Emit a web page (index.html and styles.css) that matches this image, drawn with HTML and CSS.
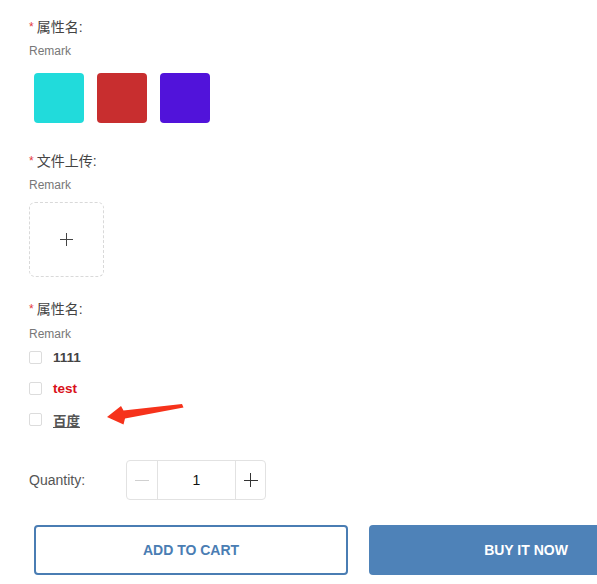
FILE: index.html
```html
<!DOCTYPE html>
<html lang="zh">
<head>
<meta charset="utf-8">
<link rel="stylesheet" href="styles.css">
</head>
<body>
<div class="page">
  <div class="field-label first"><span class="req">*</span>属性名:</div>
  <div class="remark">Remark</div>
  <div class="swatches">
    <div class="swatch cyan"></div>
    <div class="swatch red"></div>
    <div class="swatch purple"></div>
  </div>

  <div class="field-label l2"><span class="req">*</span>文件上传:</div>
  <div class="remark">Remark</div>
  <div class="upload"><span class="plus-v"></span><span class="plus-h"></span></div>

  <div class="field-label l3"><span class="req">*</span>属性名:</div>
  <div class="remark r3">Remark</div>
  <div class="checks">
    <label class="check"><span class="box"></span><span class="opt">1111</span></label>
    <label class="check"><span class="box"></span><span class="opt red-text">test</span></label>
    <label class="check"><span class="box"></span><span class="opt link">百度</span></label>
  </div>

  <div class="qty-row">
    <span class="qty-label">Quantity:</span>
    <div class="stepper">
      <div class="step minus"><span class="bar"></span></div>
      <div class="value">1</div>
      <div class="step plus"><span class="bar"></span><span class="bar vert"></span></div>
    </div>
  </div>

  <div class="actions">
    <button class="btn outline">ADD TO CART</button>
    <button class="btn solid">BUY IT NOW</button>
  </div>

  <svg class="arrow" width="597" height="584" viewBox="0 0 597 584">
    <path d="M107,417 L121,406 L123.5,410.5 L182,404 L183.5,407.5 L125,418.5 L123.5,424.5 Z" fill="#f6321b"/>
  </svg>
</div>
</body>
</html>
```
FILE: styles.css
```css
html, body {
  margin: 0;
  padding: 0;
  background: #fff;
}
body {
  font-family: "Liberation Sans", Arial, "Noto Sans CJK SC", sans-serif;
  color: #333;
  overflow: hidden;
  width: 597px;
  height: 584px;
}
.page {
  position: relative;
  padding-left: 29px;
  padding-top: 17px;
  width: 597px;
  height: 584px;
  box-sizing: border-box;
  overflow: hidden;
}
.field-label {
  height: 20px;
  line-height: 20px;
  font-size: 14px;
  color: #444;
  font-family: "Liberation Sans", "Noto Sans CJK SC", sans-serif;
}
.req {
  color: #e4393c;
  font-size: 12px;
  margin-right: 3px;
  vertical-align: 1px;
}
.l2 { margin-top: 28px; }
.l3 { margin-top: 22px; }
.remark {
  margin-top: 6px;
  height: 16px;
  line-height: 16px;
  font-size: 12px;
  color: #777;
}
.r3 { margin-top: 7px; }
.swatches {
  display: flex;
  gap: 13px;
  margin-top: 14px;
  padding-left: 5px;
}
.swatch {
  width: 50px;
  height: 50px;
  border-radius: 4px;
}
.cyan { background: #21dbdb; }
.red { background: #c82e2f; }
.purple { background: #5113da; }
.upload {
  position: relative;
  margin-top: 9px;
  width: 75px;
  height: 75px;
  box-sizing: border-box;
  border: 1px dashed #d9d9d9;
  border-radius: 6px;
}
.plus-v, .plus-h {
  position: absolute;
  background: #444;
}
.plus-h {
  left: 30px;
  top: 36px;
  width: 13px;
  height: 1px;
}
.plus-v {
  left: 36px;
  top: 30px;
  width: 1px;
  height: 13px;
}
.checks {
  display: flex;
  flex-direction: column;
}
.check {
  display: flex;
  align-items: center;
  height: 31px;
}
.box {
  width: 13px;
  height: 13px;
  box-sizing: border-box;
  border: 1px solid #dcdcdc;
  border-radius: 2px;
  margin-right: 11px;
}
.opt {
  font-size: 13.5px;
  font-weight: bold;
  color: #444;
  font-family: "Liberation Sans", "Noto Sans CJK SC", sans-serif;
}
.red-text { color: #d9101a; }
.link {
  text-decoration: underline;
  color: #555;
  font-weight: bold;
}
.qty-row {
  display: flex;
  align-items: center;
  margin-top: 25px;
  height: 40px;
}
.qty-label {
  font-size: 14px;
  color: #555;
  width: 97px;
}
.stepper {
  display: flex;
  height: 40px;
  box-sizing: border-box;
  border: 1px solid #e2e2e2;
  border-radius: 4px;
}
.step {
  position: relative;
  width: 30px;
}
.step .bar {
  position: absolute;
  left: 8px;
  top: 19px;
  width: 14px;
  height: 1px;
  background: #d0d0d0;
}
.plus .bar {
  left: 8px;
  background: #333;
}
.plus .bar.vert {
  left: 14px;
  top: 12px;
  width: 1px;
  height: 14px;
}
.minus { border-right: 1px solid #e2e2e2; }
.plus { border-left: 1px solid #e2e2e2; width: 29px; }
.value {
  width: 77px;
  display: flex;
  align-items: center;
  justify-content: center;
  font-size: 14px;
  color: #111;
}
.actions {
  display: flex;
  gap: 21px;
  margin-top: 25px;
  padding-left: 5px;
}
.btn {
  flex: none;
  width: 314px;
  height: 50px;
  border-radius: 4px;
  font-family: "Liberation Sans", Arial, sans-serif;
  font-size: 14px;
  font-weight: bold;
  box-sizing: border-box;
  cursor: pointer;
}
.outline {
  background: #fff;
  color: #4a7db3;
  border: 2px solid #4a7db3;
}
.solid {
  background: #4e82b8;
  color: #fff;
  border: none;
}
.arrow {
  position: absolute;
  left: 0;
  top: 0;
  pointer-events: none;
}
```
